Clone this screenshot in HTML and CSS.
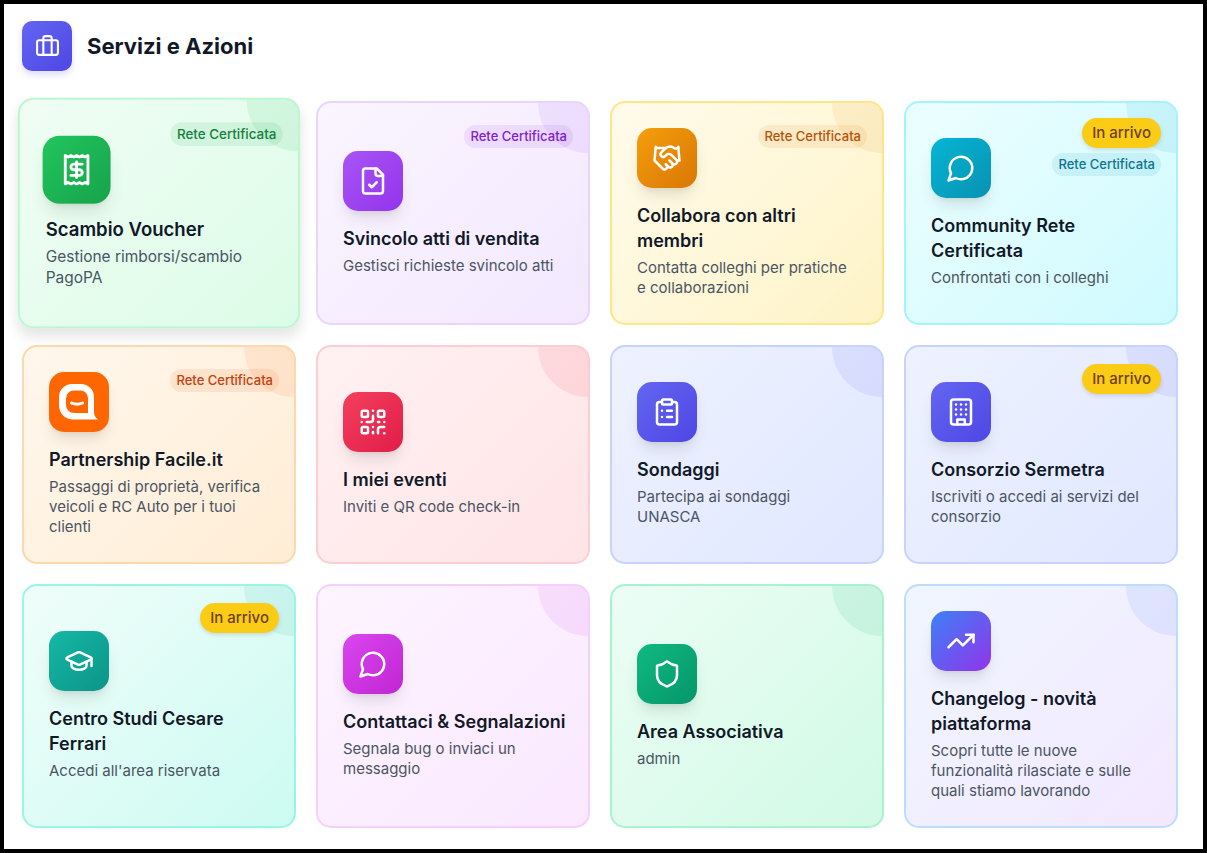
FILE: index.html
```html
<!DOCTYPE html>
<html lang="it">
<head>
    <meta charset="UTF-8">
    <meta name="viewport" content="width=device-width, initial-scale=1.0">
    <title>Servizi e Azioni</title>
    <link rel="stylesheet" href="styles.css">
</head>
<body>
    <main class="page">
        <header class="page-header">
            <span class="header-icon">
                <svg class="icon" viewBox="0 0 24 24"><path d="M16 20V4a2 2 0 0 0-2-2h-4a2 2 0 0 0-2 2v16"/><rect width="20" height="14" x="2" y="6" rx="2"/></svg>
            </span>
            <h1>Servizi e Azioni</h1>
        </header>

        <div class="cards">
            <a href="#" class="card green active">
                <span class="tags"><span class="tag-rete">Rete Certificata</span></span>
                <span class="card-icon">
                    <svg class="icon" viewBox="0 0 24 24"><path d="M4 2v20l2-1 2 1 2-1 2 1 2-1 2 1 2-1 2 1V2l-2 1-2-1-2 1-2-1-2 1-2-1-2 1Z"/><path d="M16 8h-6a2 2 0 1 0 0 4h4a2 2 0 1 1 0 4H8"/><path d="M12 17.5v-11"/></svg>
                </span>
                <h3>Scambio Voucher</h3>
                <p>Gestione rimborsi/scambio PagoPA</p>
            </a>

            <a href="#" class="card purple">
                <span class="tags"><span class="tag-rete">Rete Certificata</span></span>
                <span class="card-icon">
                    <svg class="icon" viewBox="0 0 24 24"><path d="M15 2H6a2 2 0 0 0-2 2v16a2 2 0 0 0 2 2h12a2 2 0 0 0 2-2V7Z"/><path d="M14 2v4a2 2 0 0 0 2 2h4"/><path d="m9 15 2 2 4-4"/></svg>
                </span>
                <h3>Svincolo atti di vendita</h3>
                <p>Gestisci richieste svincolo atti</p>
            </a>

            <a href="#" class="card amber">
                <span class="tags"><span class="tag-rete">Rete Certificata</span></span>
                <span class="card-icon">
                    <svg class="icon" viewBox="0 0 24 24"><path d="m11 17 2 2a1 1 0 1 0 3-3"/><path d="m14 14 2.5 2.5a1 1 0 1 0 3-3l-3.88-3.88a3 3 0 0 0-4.24 0l-.88.88a1 1 0 1 1-3-3l2.81-2.81a5.79 5.79 0 0 1 7.06-.87l.47.28a2 2 0 0 0 1.42.25L21 4"/><path d="m21 3 1 11h-2"/><path d="M3 3 2 14l6.5 6.5a1 1 0 1 0 3-3"/><path d="M3 4h8"/></svg>
                </span>
                <h3>Collabora con altri membri</h3>
                <p>Contatta colleghi per pratiche e collaborazioni</p>
            </a>

            <a href="#" class="card cyan">
                <span class="tags stacked"><span class="tag-arrivo">In arrivo</span><span class="tag-rete">Rete Certificata</span></span>
                <span class="card-icon">
                    <svg class="icon" viewBox="0 0 24 24"><path d="M7.9 20A9 9 0 1 0 4 16.1L2 22Z"/></svg>
                </span>
                <h3>Community Rete Certificata</h3>
                <p>Confrontati con i colleghi</p>
            </a>

            <a href="#" class="card orange">
                <span class="tags"><span class="tag-rete">Rete Certificata</span></span>
                <span class="card-icon">
                    <svg class="logo" viewBox="0 0 60 60"><path fill="#fff" fill-rule="evenodd" d="M23 12h9a13 13 0 0 1 13 13v15c0 3 1 5 4 7.500H24a14 14 0 0 1-14-14V25a13 13 0 0 1 13-13Zm2 6.500a8 8 0 0 0-8 8V33a8 8 0 0 0 8 8h14V26a7.500 7.500 0 0 0-7.500-7.500Z"/><path fill="none" stroke="#fff" stroke-width="3" stroke-linecap="round" d="M22.500 31q5.500 2.500 11 0"/></svg>
                </span>
                <h3>Partnership Facile.it</h3>
                <p>Passaggi di proprietà, verifica veicoli e RC Auto per i tuoi clienti</p>
            </a>

            <a href="#" class="card rose">
                <span class="card-icon">
                    <svg class="icon" viewBox="0 0 24 24"><rect width="5" height="5" x="3" y="3" rx="1"/><rect width="5" height="5" x="16" y="3" rx="1"/><rect width="5" height="5" x="3" y="16" rx="1"/><path d="M21 16h-3a2 2 0 0 0-2 2v3"/><path d="M21 21v.01"/><path d="M12 7v3a2 2 0 0 1-2 2H7"/><path d="M3 12h.01"/><path d="M12 3h.01"/><path d="M12 16v.01"/><path d="M16 12h1"/><path d="M21 12v.01"/><path d="M12 21v-1"/></svg>
                </span>
                <h3>I miei eventi</h3>
                <p>Inviti e QR code check-in</p>
            </a>

            <a href="#" class="card indigo">
                <span class="card-icon">
                    <svg class="icon" viewBox="0 0 24 24"><rect width="8" height="4" x="8" y="2" rx="1"/><path d="M16 4h2a2 2 0 0 1 2 2v14a2 2 0 0 1-2 2H6a2 2 0 0 1-2-2V6a2 2 0 0 1 2-2h2"/><path d="M12 11h4"/><path d="M12 16h4"/><path d="M8 11h.01"/><path d="M8 16h.01"/></svg>
                </span>
                <h3>Sondaggi</h3>
                <p>Partecipa ai sondaggi UNASCA</p>
            </a>

            <a href="#" class="card indigo">
                <span class="tags"><span class="tag-arrivo">In arrivo</span></span>
                <span class="card-icon">
                    <svg class="icon" viewBox="0 0 24 24"><rect width="16" height="20" x="4" y="2" rx="2"/><path d="M9 22v-4h6v4"/><path d="M8 6h.01"/><path d="M16 6h.01"/><path d="M12 6h.01"/><path d="M12 10h.01"/><path d="M12 14h.01"/><path d="M16 10h.01"/><path d="M16 14h.01"/><path d="M8 10h.01"/><path d="M8 14h.01"/></svg>
                </span>
                <h3>Consorzio Sermetra</h3>
                <p>Iscriviti o accedi ai servizi del consorzio</p>
            </a>

            <a href="#" class="card teal">
                <span class="tags"><span class="tag-arrivo">In arrivo</span></span>
                <span class="card-icon">
                    <svg class="icon" viewBox="0 0 24 24"><path d="M21.420 10.922a1 1 0 0 0-.019-1.838L12.830 5.180a2 2 0 0 0-1.660 0L2.600 9.080a1 1 0 0 0 0 1.832l8.570 3.908a2 2 0 0 0 1.660 0z"/><path d="M22 10v6"/><path d="M6 12.500V16a6 3 0 0 0 12 0v-3.500"/></svg>
                </span>
                <h3>Centro Studi Cesare Ferrari</h3>
                <p>Accedi all'area riservata</p>
            </a>

            <a href="#" class="card fuchsia">
                <span class="card-icon">
                    <svg class="icon" viewBox="0 0 24 24"><path d="M7.9 20A9 9 0 1 0 4 16.1L2 22Z"/></svg>
                </span>
                <h3>Contattaci &amp; Segnalazioni</h3>
                <p>Segnala bug o inviaci un messaggio</p>
            </a>

            <a href="#" class="card emerald">
                <span class="card-icon">
                    <svg class="icon" viewBox="0 0 24 24"><path d="M20 13c0 5-3.500 7.500-7.660 8.950a1 1 0 0 1-.670-.010C7.500 20.500 4 18 4 13V6a1 1 0 0 1 1-1c2 0 4.500-1.200 6.240-2.720a1.170 1.170 0 0 1 1.520 0C14.510 3.810 17 5 19 5a1 1 0 0 1 1 1z"/></svg>
                </span>
                <h3>Area Associativa</h3>
                <p>admin</p>
            </a>

            <a href="#" class="card blue">
                <span class="card-icon">
                    <svg class="icon" viewBox="0 0 24 24"><path d="M22 7 13.500 15.500 8.500 10.500 2 17"/><path d="M16 7h6v6"/></svg>
                </span>
                <h3>Changelog - novità piattaforma</h3>
                <p>Scopri tutte le nuove funzionalità rilasciate e sulle quali stiamo lavorando</p>
            </a>
        </div>
    </main>
</body>
</html>
```
FILE: styles.css
```css
* {
    box-sizing: border-box;
}
body {
    margin: 0;
    min-height: 100vh;
    border: 4px solid #000;
    background: #fff;
    color: #111827;
    font-family: Inter, "Liberation Sans", sans-serif;
}
h1, h3, p {
    margin: 0;
}
.page {
    padding: 17px 25px 20px 18px;
}
.page-header {
    display: flex;
    align-items: center;
    gap: 15px;
    margin-bottom: 30px;
}
.header-icon {
    display: flex;
    align-items: center;
    justify-content: center;
    width: 50px;
    height: 50px;
    border-radius: 10px;
    background: linear-gradient(135deg, #6366f1, #4f46e5);
    box-shadow: 0 4px 6px rgba(79, 70, 229, 0.18);
}
.header-icon .icon {
    width: 25px;
    height: 25px;
}
h1 {
    font-size: 22px;
    line-height: 30px;
    font-weight: 700;
}
.icon {
    width: 30px;
    height: 30px;
    fill: none;
    stroke: #fff;
    stroke-width: 2;
    stroke-linecap: round;
    stroke-linejoin: round;
}
.logo {
    width: 60px;
    height: 60px;
}

/* cards */
.cards {
    display: grid;
    grid-template-columns: repeat(4, 1fr);
    gap: 20px;
}
.card {
    position: relative;
    display: flex;
    flex-direction: column;
    justify-content: center;
    align-items: flex-start;
    padding: 25px 20px 25px 25px;
    border: 2px solid var(--border);
    border-radius: 15px;
    background: linear-gradient(135deg, var(--bg-from), var(--bg-to)) border-box;
    color: inherit;
    text-decoration: none;
    overflow: hidden;
}
/* quarter circle in the corner */
.card::before {
    content: "";
    position: absolute;
    top: -50px;
    right: -50px;
    width: 100px;
    height: 100px;
    border-radius: 50%;
    background: linear-gradient(135deg, var(--from), var(--to));
    opacity: 0.1;
}
.card.active {
    transform: scale(1.03);
    box-shadow: 0 8px 12px rgba(0, 0, 0, 0.1);
}
.card-icon {
    display: flex;
    align-items: center;
    justify-content: center;
    width: 60px;
    height: 60px;
    margin-bottom: 15px;
    border-radius: 15px;
    background: linear-gradient(135deg, var(--from), var(--to));
    box-shadow: 0 10px 15px -3px rgba(0, 0, 0, 0.1), 0 4px 6px -4px rgba(0, 0, 0, 0.1);
}
.card.active .card-icon {
    transform: scale(1.1);
}
.card h3 {
    margin-bottom: 5px;
    font-size: 18px;
    line-height: 25px;
    font-weight: 600;
}
.card p {
    padding-right: 5px;
    color: #4b5563;
    font-size: 15px;
    line-height: 20px;
}

/* tags */
.tags {
    position: absolute;
    top: 17px;
    right: 15px;
    display: flex;
    flex-direction: column;
    align-items: flex-end;
}
.tags.stacked {
    top: 15px;
}
.tag-rete {
    margin-top: 5px;
    padding: 2px 6px;
    border-radius: 12px;
    background: var(--tag-bg);
    color: var(--tag);
    font-size: 13px;
    line-height: 19px;
    font-weight: 500;
}
.tag-arrivo {
    padding: 5px 10px;
    border-radius: 15px;
    background: #facc15;
    color: #713f12;
    font-size: 15px;
    line-height: 20px;
    font-weight: 500;
    box-shadow: 0 2px 4px rgba(0, 0, 0, 0.12);
}

/* colors */
.green {
    --bg-from: #f0fdf4;
    --bg-to: #dcfce7;
    --border: #bbf7d0;
    --from: #22c55e;
    --to: #16a34a;
    --tag: #15803d;
    --tag-bg: rgba(22, 163, 74, 0.1);
}
.purple {
    --bg-from: #faf5ff;
    --bg-to: #f3e8ff;
    --border: #e9d5ff;
    --from: #a855f7;
    --to: #9333ea;
    --tag: #7e22ce;
    --tag-bg: rgba(147, 51, 234, 0.1);
}
.amber {
    --bg-from: #fffbeb;
    --bg-to: #fef3c7;
    --border: #fde68a;
    --from: #f59e0b;
    --to: #d97706;
    --tag: #b45309;
    --tag-bg: rgba(217, 119, 6, 0.1);
}
.cyan {
    --bg-from: #ecfeff;
    --bg-to: #cffafe;
    --border: #a5f3fc;
    --from: #06b6d4;
    --to: #0891b2;
    --tag: #0e7490;
    --tag-bg: rgba(8, 145, 178, 0.1);
}
.orange {
    --bg-from: #fff7ed;
    --bg-to: #ffedd5;
    --border: #fed7aa;
    --from: #f97316;
    --to: #ea580c;
    --tag: #c2410c;
    --tag-bg: rgba(234, 88, 12, 0.1);
}
.orange .card-icon {
    background: #ff6600;
}
.rose {
    --bg-from: #fff1f2;
    --bg-to: #ffe4e6;
    --border: #fecdd3;
    --from: #f43f5e;
    --to: #e11d48;
}
.indigo {
    --bg-from: #eef2ff;
    --bg-to: #e0e7ff;
    --border: #c7d2fe;
    --from: #6366f1;
    --to: #4f46e5;
}
.teal {
    --bg-from: #f0fdfa;
    --bg-to: #ccfbf1;
    --border: #99f6e4;
    --from: #14b8a6;
    --to: #0d9488;
}
.fuchsia {
    --bg-from: #fdf4ff;
    --bg-to: #fae8ff;
    --border: #f5d0fe;
    --from: #d946ef;
    --to: #c026d3;
}
.emerald {
    --bg-from: #ecfdf5;
    --bg-to: #d1fae5;
    --border: #a7f3d0;
    --from: #10b981;
    --to: #059669;
}
.blue {
    --bg-from: #eff6ff;
    --bg-to: #f3e8ff;
    --border: #bfdbfe;
    --from: #3b82f6;
    --to: #9333ea;
}
.blue::before {
    background: #3b82f6;
}
```
